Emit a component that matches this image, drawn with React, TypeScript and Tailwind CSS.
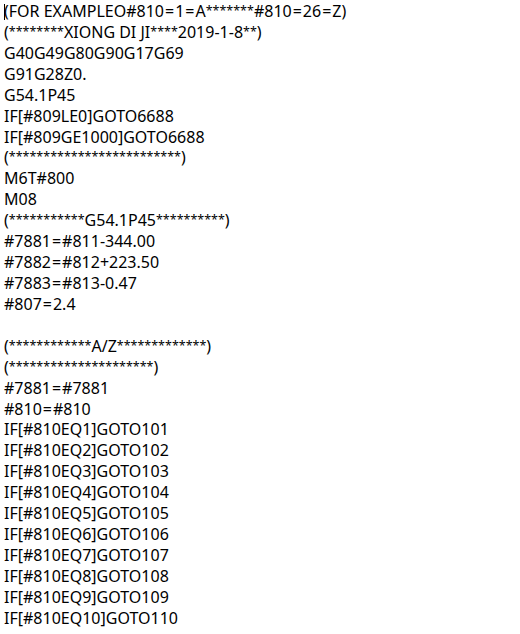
const lines: string[] = [
  "(FOR EXAMPLEO#810=1=A*******#810=26=Z)",
  "(********XIONG DI JI****2019-1-8**)",
  "G40G49G80G90G17G69",
  "G91G28Z0.",
  "G54.1P45",
  "IF[#809LE0]GOTO6688",
  "IF[#809GE1000]GOTO6688",
  "(*************************)",
  "M6T#800",
  "M08",
  "(***********G54.1P45**********)",
  "#7881=#811-344.00",
  "#7882=#812+223.50",
  "#7883=#813-0.47",
  "#807=2.4",
  "",
  "(************A/Z*************)",
  "(*********************)",
  "#7881=#7881",
  "#810=#810",
  "IF[#810EQ1]GOTO101",
  "IF[#810EQ2]GOTO102",
  "IF[#810EQ3]GOTO103",
  "IF[#810EQ4]GOTO104",
  "IF[#810EQ5]GOTO105",
  "IF[#810EQ6]GOTO106",
  "IF[#810EQ7]GOTO107",
  "IF[#810EQ8]GOTO108",
  "IF[#810EQ9]GOTO109",
  "IF[#810EQ10]GOTO110",
];

// asterisks come out narrow in the editor font, "=" a bit wider
const renderLine = (line: string) =>
  line.split(/(\*+|=)/).map((part, i) => {
    if (part.startsWith("*")) {
      return (
        <span key={i} className="text-[12.5px] align-[2px]">
          {part}
        </span>
      );
    }
    if (part === "=") {
      return (
        <span key={i} className="px-[1px]">
          =
        </span>
      );
    }
    return part;
  });

const App = () => {
  return (
    <div className="w-[520px] h-[634px] bg-white overflow-hidden pl-[4px] pt-[1px] font-['Noto_Sans','Noto_Sans_CJK_SC',sans-serif] text-[16px] leading-[20.93px] text-black">
      {lines.map((line, i) => (
        <div key={i} className="relative whitespace-pre h-[20.93px]">
          {i === 0 && (
            <span className="absolute left-0 top-[3px] w-px h-[16px] bg-black" />
          )}
          {renderLine(line)}
        </div>
      ))}
    </div>
  );
};

export default App;
